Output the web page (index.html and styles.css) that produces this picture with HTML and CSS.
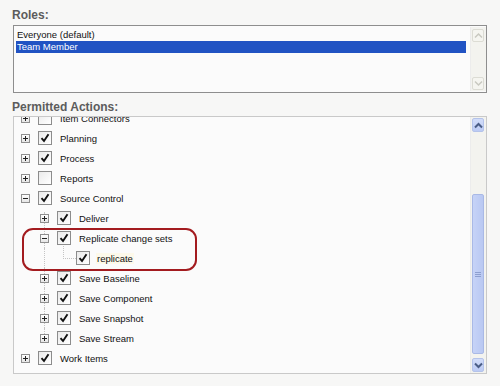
FILE: index.html
```html
<!DOCTYPE html>
<html>
  <head>
    <title>Permissions</title>
    <link rel="stylesheet" href="styles.css">
  </head>

  <body>
    <div class="panel">
      <div class="field-label">Roles:</div>
      <div class="listbox">
        <div class="list-items">
          <div class="list-item">Everyone (default)</div>
          <div class="list-item selected">Team Member</div>
        </div>
        <div class="scrollbar disabled">
          <div class="sb-btn">
            <svg width="9" height="7" viewBox="0 0 9 7"><polyline points="1,5.5 4.5,2 8,5.5" /></svg>
          </div>
          <div class="sb-track"></div>
          <div class="sb-btn">
            <svg width="9" height="7" viewBox="0 0 9 7"><polyline points="1,1.5 4.5,5 8,1.5" /></svg>
          </div>
        </div>
      </div>

      <div class="field-label second">Permitted Actions:</div>
      <div class="treebox">
        <div class="tree-view">
          <div class="tree">
            <div class="row l0"><span class="exp plus"></span><span class="check"></span><span class="label">Item Connectors</span></div>
            <div class="row l0"><span class="exp plus"></span><span class="check on"></span><span class="label">Planning</span></div>
            <div class="row l0"><span class="exp plus"></span><span class="check on"></span><span class="label">Process</span></div>
            <div class="row l0"><span class="exp plus"></span><span class="check"></span><span class="label">Reports</span></div>
            <div class="row l0"><span class="exp"></span><span class="check on"></span><span class="label">Source Control</span></div>
            <div class="row l1 first"><span class="exp plus"></span><span class="check on"></span><span class="label">Deliver</span></div>
            <div class="row l1 parent"><span class="exp"></span><span class="check on"></span><span class="label">Replicate change sets</span></div>
            <div class="row l2"><span class="exp none"></span><span class="check on"></span><span class="label hilite">replicate</span></div>
            <div class="row l1"><span class="exp plus"></span><span class="check on"></span><span class="label">Save Baseline</span></div>
            <div class="row l1"><span class="exp plus"></span><span class="check on"></span><span class="label">Save Component</span></div>
            <div class="row l1"><span class="exp plus"></span><span class="check on"></span><span class="label">Save Snapshot</span></div>
            <div class="row l1 last"><span class="exp plus"></span><span class="check on"></span><span class="label">Save Stream</span></div>
            <div class="row l0"><span class="exp plus"></span><span class="check on"></span><span class="label">Work Items</span></div>
          </div>
        </div>
        <div class="scrollbar">
          <div class="sb-btn">
            <svg width="9" height="7" viewBox="0 0 9 7"><polyline points="1,5.5 4.5,2 8,5.5" /></svg>
          </div>
          <div class="sb-track">
            <div class="sb-thumb"><span class="grip"></span></div>
          </div>
          <div class="sb-btn">
            <svg width="9" height="7" viewBox="0 0 9 7"><polyline points="1,1.5 4.5,5 8,1.5" /></svg>
          </div>
        </div>
        <div class="callout"></div>
      </div>
    </div>

    <script>
      // put a tick in every checked box
      document.querySelectorAll(".check.on").forEach(function (box) {
        box.innerHTML =
          '<svg width="14" height="14" viewBox="0 0 14 14"><path d="M3.5 7.2 L6 10 L10.5 3.2" /></svg>';
      });
    </script>
  </body>
</html>
```

FILE: styles.css
```css
body {
  font-family: "Liberation Sans", Arial, sans-serif;
  background-color: #f7f7f6;
  margin: 0;
}

.panel {
  padding: 8px 13px 0;
}

.field-label {
  font-size: 12px;
  line-height: 14px;
  font-weight: bold;
  color: #5c5c5c;
  margin-left: -1px;
  margin-bottom: 3px;
}

.field-label.second {
  margin-top: 7px;
  margin-bottom: 2px;
}

.listbox {
  display: flex;
  height: 68px;
  box-sizing: border-box;
  border: 1px solid #8e8e8e;
  background: #fbfbfb;
  padding: 3px 0 1px 2px;
}

.list-items {
  flex: 1;
  margin-right: 4px;
}

.list-item {
  font-size: 9.5px;
  line-height: 12px;
  height: 12px;
  padding-left: 1px;
  color: #111;
}

.list-item.selected {
  background: #2153c3;
  color: white;
}

.scrollbar {
  width: 16px;
  box-sizing: border-box;
  display: flex;
  flex-direction: column;
  padding: 1px 2px 1px 1px;
  border-left: 1px solid #ececec;
  background: #f3f3ef;
}

.listbox .scrollbar {
  margin-top: -2px;
  padding-top: 2px;
}

.sb-btn {
  height: 14px;
  box-sizing: border-box;
  border: 1px solid #b4c3ea;
  border-radius: 2px;
  background: linear-gradient(#d2ddf9, #bccbf4);
  display: flex;
  align-items: center;
  justify-content: center;
}

.sb-btn polyline {
  fill: none;
  stroke: #4a5d86;
  stroke-width: 2;
}

.scrollbar.disabled .sb-btn {
  height: 13px;
  border-color: #dcdcd4;
  background: #f5f5f0;
}

.scrollbar.disabled .sb-btn polyline {
  stroke: #c9c9c0;
  stroke-width: 1.5;
}

.sb-track {
  flex: 1;
  display: flex;
  flex-direction: column;
  padding: 62px 0 4px;
}

.scrollbar.disabled .sb-track {
  padding: 0;
}

.sb-thumb {
  flex: 1;
  border: 1px solid #a9b9e6;
  border-radius: 2px;
  background: linear-gradient(to right, #c6d3f7, #b9c8f2);
  display: flex;
  align-items: center;
  justify-content: center;
}

.grip {
  width: 6px;
  height: 5px;
  background: repeating-linear-gradient(#8d9fcf 0 1px, transparent 1px 2px);
}

.treebox {
  position: relative;
  display: flex;
  height: 258px;
  box-sizing: border-box;
  border: 1px solid #c9c9c9;
  background: #fbfbfb;
}

.tree-view {
  flex: 1;
  overflow: hidden;
}

.tree {
  margin-top: -9px;
}

.row {
  position: relative;
  display: flex;
  align-items: center;
  height: 20px;
  font-size: 9.5px;
  color: #111;
}

.row.l0 {
  padding-left: 7px;
}

.row.l1 {
  padding-left: 26px;
}

.row.l2 {
  padding-left: 45px;
}

/* dotted tree lines */
.row.l1:before,
.row.l2:before {
  content: "";
  position: absolute;
  left: 30px;
  top: 0;
  bottom: 0;
  border-left: 1px dotted #c4c4c4;
}

.row.l1.first:before {
  top: 4px;
}

.row.l1.last:before {
  bottom: 10px;
}

.row.l2:after {
  content: "";
  position: absolute;
  left: 49px;
  top: -2px;
  width: 12px;
  height: 12px;
  border-left: 1px dotted #c4c4c4;
  border-bottom: 1px dotted #c4c4c4;
}

.exp {
  position: relative;
  width: 9px;
  height: 9px;
  box-sizing: border-box;
  border: 1px solid #8f8f8f;
  background: linear-gradient(#ffffff, #e6e6e6);
  margin-right: 8px;
  z-index: 1;
}

.exp:before {
  content: "";
  position: absolute;
  left: 1px;
  top: 3px;
  width: 5px;
  height: 1px;
  background: #222;
}

.exp.plus:after {
  content: "";
  position: absolute;
  left: 3px;
  top: 1px;
  width: 1px;
  height: 5px;
  background: #222;
}

.exp.none {
  border: none;
  background: none;
}

.exp.none:before {
  display: none;
}

.check {
  width: 14px;
  height: 14px;
  box-sizing: border-box;
  border: 1px solid #8c8c8c;
  background: linear-gradient(135deg, #eaeaea, #ffffff);
  margin-right: 8px;
  position: relative;
  z-index: 1;
}

.check svg {
  display: block;
  margin: -1px;
}

.check path {
  fill: none;
  stroke: #111;
  stroke-width: 1.9;
}

.label {
  white-space: nowrap;
}

.label.hilite {
  background: #fdf9ea;
  padding: 0 1px;
  margin-left: -2px;
}

.callout {
  position: absolute;
  left: 8px;
  top: 111px;
  width: 175px;
  height: 43px;
  box-sizing: border-box;
  border: 2px solid #a31b1f;
  border-radius: 11px;
}
```
